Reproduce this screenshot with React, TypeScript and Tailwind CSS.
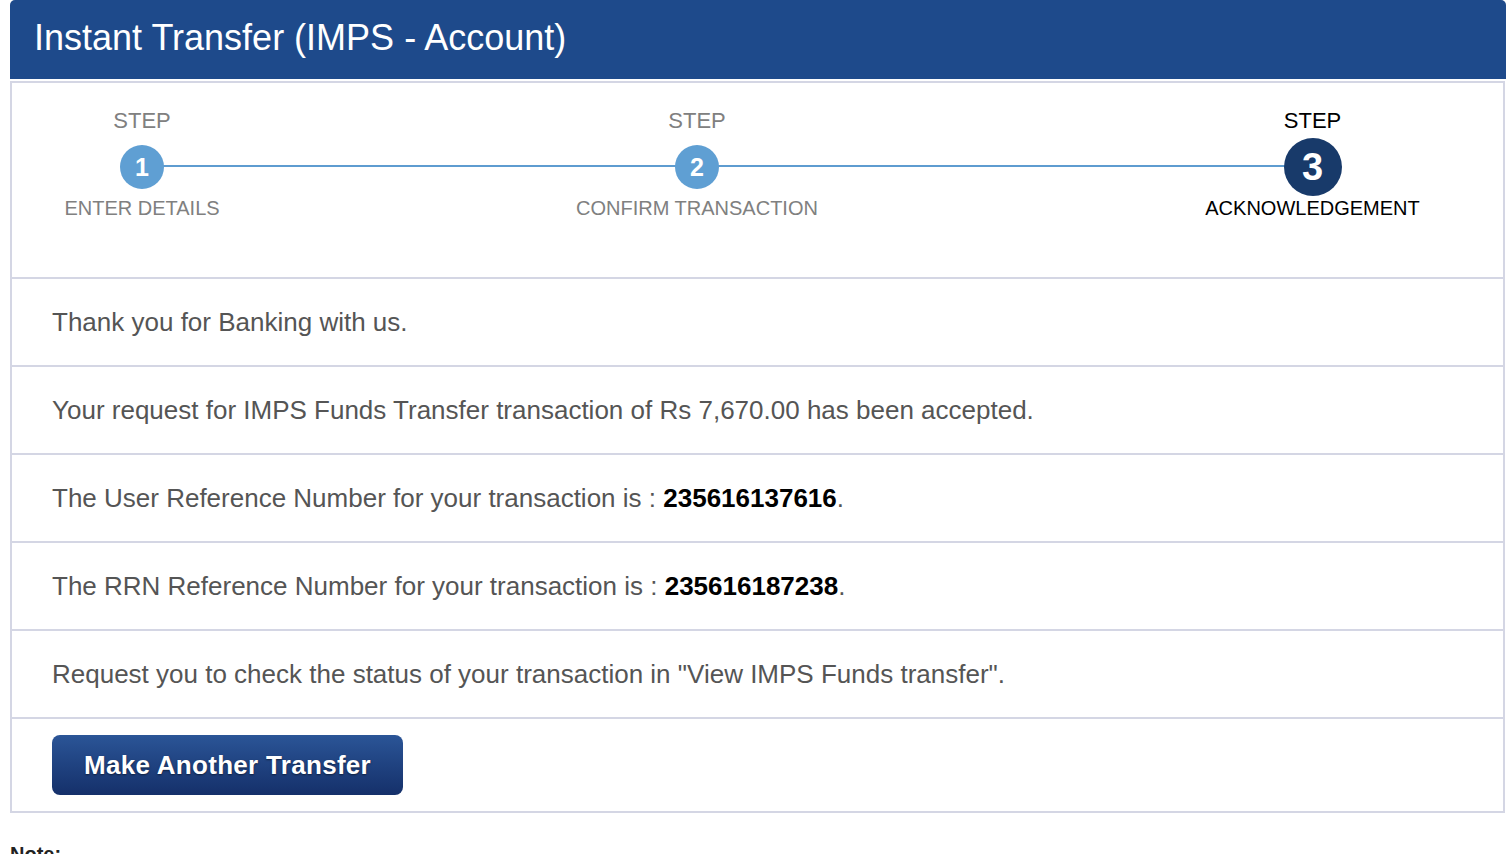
import React from 'react';

const steps = [
  { n: 1, title: 'ENTER DETAILS', active: false },
  { n: 2, title: 'CONFIRM TRANSACTION', active: false },
  { n: 3, title: 'ACKNOWLEDGEMENT', active: true },
];

const Row: React.FC<{ children: React.ReactNode }> = ({ children }) => (
  <div className="h-[88px] border-b-2 border-[#d4d6e4] flex items-center pl-10 text-[26px] text-[#555555]">
    <p>{children}</p>
  </div>
);

const App: React.FC = () => {
  return (
    <div className="min-h-screen bg-white font-['Liberation_Sans',Arial,sans-serif]">
      <div className="ml-[10px] w-[1496px]">
        {/* Header */}
        <div className="h-[79px] bg-[#1e4a8b] rounded-tl-[5px] rounded-tr-[5px] flex items-center pl-6 pb-[3px]">
          <h1 className="text-[36px] text-white leading-none">Instant Transfer (IMPS - Account)</h1>
        </div>

        {/* Card */}
        <div className="mt-[2px] w-[1495px] border-2 border-[#d4d6e4]">
          {/* Steps */}
          <div className="relative h-[196px] border-b-2 border-[#d4d6e4] pt-[26px]">
            <div className="absolute left-[130px] right-[190px] top-[82px] h-[2px] bg-[#5e9cd0]" />
            <div className="relative grid grid-cols-[260px_850px_1fr]">
              {steps.map((s) => (
                <div key={s.n} className="flex flex-col items-center">
                  <span className={`text-[22px] leading-[24px] ${s.active ? 'text-black' : 'text-[#808080]'}`}>STEP</span>
                  <div className="mt-[5px] h-[58px] flex items-center justify-center">
                    {s.active ? (
                      <div className="w-[58px] h-[58px] rounded-full bg-[#183a6a] flex items-center justify-center text-white font-bold text-[38px] leading-none">
                        {s.n}
                      </div>
                    ) : (
                      <div className="w-11 h-11 rounded-full bg-[#5f9fd3] flex items-center justify-center text-white font-bold text-[25px] leading-none">
                        {s.n}
                      </div>
                    )}
                  </div>
                  <span className={`mt-[1px] text-[20px] leading-[23px] ${s.active ? 'text-black' : 'text-[#808080]'}`}>{s.title}</span>
                </div>
              ))}
            </div>
          </div>

          <Row>Thank you for Banking with us.</Row>
          <Row>Your request for IMPS Funds Transfer transaction of Rs 7,670.00 has been accepted.</Row>
          <Row>
            The User Reference Number for your transaction is :{' '}
            <b className="text-black text-[26px]">235616137616</b>.
          </Row>
          <Row>
            The RRN Reference Number for your transaction is :{' '}
            <b className="text-black text-[26px]">235616187238</b>.
          </Row>
          <Row>Request you to check the status of your transaction in "View IMPS Funds transfer".</Row>

          <div className="h-[92px] pt-[16px] pl-10">
            <button className="w-[351px] h-[60px] rounded-[8px] bg-gradient-to-b from-[#2b5597] to-[#15306a] text-white font-bold text-[26px] tracking-[0.3px] [text-shadow:0_1px_2px_rgba(0,0,0,0.5)]">
              Make Another Transfer
            </button>
          </div>
        </div>

        <p className="mt-[26px] text-[20px] font-bold text-[#222222]">Note:</p>
      </div>
    </div>
  );
};

export default App;
